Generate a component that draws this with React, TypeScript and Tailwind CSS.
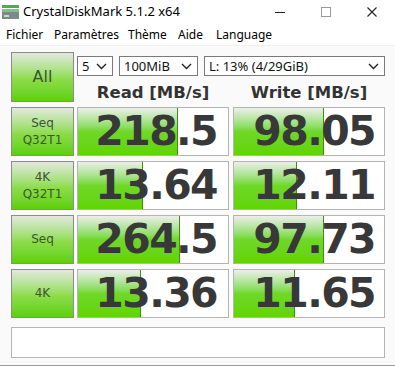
const ui = '"Noto Sans", "Open Sans", sans-serif';
const bold = '"DejaVu Sans", Verdana, sans-serif';

const rows = [
  { label: ['Seq', 'Q32T1'], read: '218.5', write: '98.05', rw: 100, ww: 90 },
  { label: ['4K', 'Q32T1'], read: '13.64', write: '12.11', rw: 65, ww: 63 },
  { label: ['Seq'], read: '264.5', write: '97.73', rw: 102, ww: 90 },
  { label: ['4K'], read: '13.36', write: '11.65', rw: 63, ww: 61 },
];

const menu = [
  { t: 'Fichier', w: 'w-[48px]' },
  { t: 'Paramètres', w: 'w-[74px]' },
  { t: 'Thème', w: 'w-[50px]' },
  { t: 'Aide', w: 'w-[38px]' },
  { t: 'Language', w: 'w-[60px]' },
];

function Chevron() {
  return (
    <svg width="11" height="7" viewBox="0 0 11 7" className="shrink-0">
      <path d="M1 1 L5.5 5.5 L10 1" fill="none" stroke="#222" strokeWidth="1.4" />
    </svg>
  );
}

function Select({ value, w }: { value: string; w: string }) {
  return (
    <div className={`${w} h-[20px] bg-white border border-[#7a7a7a] flex items-center justify-between pl-[4px] pr-[5px] text-[13px] text-[#111]`}>
      <span className="leading-none">{value}</span>
      <Chevron />
    </div>
  );
}

function Meter({ value, fill, pad }: { value: string; fill: number; pad: string }) {
  return (
    <div className="relative w-[152px] h-[49px] bg-white border border-[#b4b4b4] overflow-hidden">
      <div
        className="absolute left-0 top-0 bottom-0 bg-gradient-to-b from-[#eceeea] via-[#70d826] via-50% to-[#62d400] border-r border-[#3f8f10]"
        style={{ width: fill }}
      />
      <div
        className={`relative h-full flex items-center justify-end ${pad} text-[41px] font-bold text-[#383838] tracking-[-1.6px] leading-none`}
        style={{ fontFamily: bold }}
      >
        {value}
      </div>
    </div>
  );
}

function GreenButton({ children, h }: { children: React.ReactNode; h: string }) {
  return (
    <div
      className={`w-[63px] ${h} border border-[#8c8c8c] bg-gradient-to-b from-[#e2e8dc] via-[#8cdc48] via-55% to-[#5cd000] flex flex-col items-center justify-center text-[#3c5530]`}
      style={{ fontFamily: bold }}
    >
      {children}
    </div>
  );
}

export default function App() {
  return (
    <div className="w-[395px] h-[366px] bg-[#fafafa] flex flex-col border-b border-[#9a9a9a]" style={{ fontFamily: ui }}>
      {/* title bar */}
      <div className="h-[24px] bg-white flex items-center">
        <svg width="17" height="14" viewBox="0 0 17 14" className="ml-[2px]">
          <rect x="0" y="0" width="17" height="3" fill="#3cb54a" />
          <rect x="0" y="4" width="17" height="3" fill="#7bc67f" />
          <rect x="0" y="7" width="17" height="7" fill="#7d8a8a" />
          <rect x="2" y="10" width="5" height="2" fill="#b8e8b0" />
        </svg>
        <span className="ml-[4px] text-[13px] text-black">CrystalDiskMark 5.1.2 x64</span>
        <div className="ml-auto flex items-center h-full">
          <div className="w-[46px] flex justify-center"><div className="w-[10px] h-px bg-[#222]" /></div>
          <div className="w-[46px] flex justify-center"><div className="w-[10px] h-[10px] border border-[#9a9a9a]" /></div>
          <div className="w-[46px] flex justify-center">
            <svg width="10" height="10" viewBox="0 0 10 10">
              <path d="M0.5 0.5 L9.5 9.5 M9.5 0.5 L0.5 9.5" stroke="#222" strokeWidth="1.1" />
            </svg>
          </div>
        </div>
      </div>

      {/* menu */}
      <div className="h-[22px] bg-white flex items-center pl-[6px] text-[12px] text-black border-b border-[#f0f0f0]">
        {menu.map((m) => (
          <span key={m.t} className={`${m.w} shrink-0 whitespace-nowrap`}>{m.t}</span>
        ))}
      </div>

      {/* body */}
      <div className="pl-[11px] pt-[6px] flex flex-col">
        <div className="flex">
          <GreenButton h="h-[50px]">
            <span className="text-[16px] leading-none">All</span>
          </GreenButton>
          <div className="ml-[3px] flex flex-col">
            <div className="flex gap-[6px] mt-[4px]">
              <Select value="5" w="w-[36px]" />
              <Select value="100MiB" w="w-[79px]" />
              <Select value="L: 13% (4/29GiB)" w="w-[181px]" />
            </div>
            <div className="flex h-[26px] pb-[1px] items-end leading-none text-[16.5px] font-bold text-[#333]" style={{ fontFamily: bold }}>
              <div className="w-[152px] text-center">Read [MB/s]</div>
              <div className="w-[152px] ml-[4px] text-center">Write [MB/s]</div>
            </div>
          </div>
        </div>

        <div className="flex flex-col gap-[5px] mt-[5px]">
          {rows.map((r) => (
            <div key={r.read} className="flex">
              <GreenButton h="h-[49px]">
                {r.label.map((l) => (
                  <span key={l} className="text-[12px] leading-[17px]">{l}</span>
                ))}
              </GreenButton>
              <div className="ml-[3px]"><Meter value={r.read} fill={r.rw} pad="pr-[11px]" /></div>
              <div className="ml-[4px]"><Meter value={r.write} fill={r.ww} pad="pr-[9px]" /></div>
            </div>
          ))}
        </div>

        <div className="mt-[9px] w-[374px] h-[31px] bg-white border border-[#b4b4b4]" />
      </div>
    </div>
  );
}
